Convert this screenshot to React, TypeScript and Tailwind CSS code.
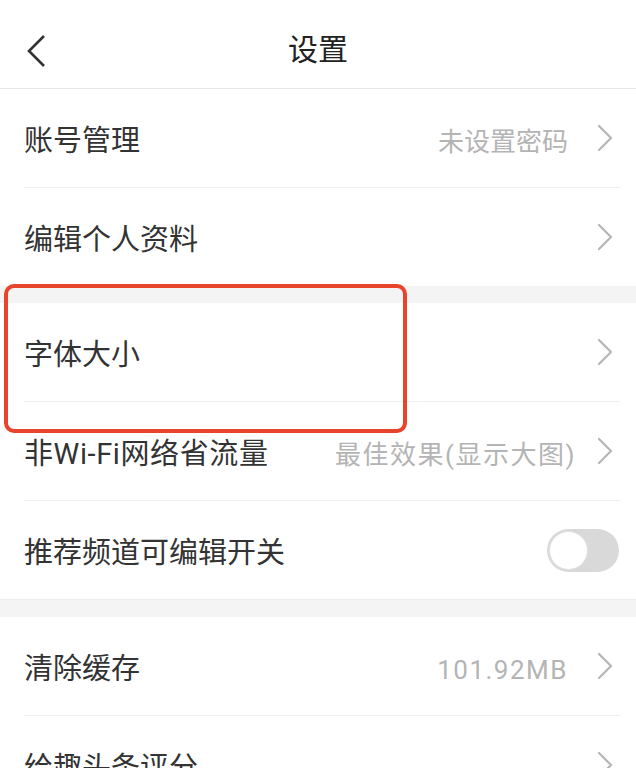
import React from "react";

const font = { fontFamily: 'Roboto, "Noto Sans CJK SC", "Noto Sans", sans-serif' };

function Chevron() {
  return (
    <svg width="18" height="28" viewBox="0 0 18 28" className="shrink-0">
      <path d="M3 2 L15 14 L3 26" fill="none" stroke="#b5b5b5" strokeWidth="2.2" strokeLinecap="round" strokeLinejoin="round" />
    </svg>
  );
}

function Row({
  label,
  value,
  last,
  valueClass = "mr-[28px]",
  labelClass = "",
}: {
  label: string;
  value?: string;
  last?: boolean;
  valueClass?: string;
  labelClass?: string;
}) {
  return (
    <div className="bg-white">
      <div className="flex h-[98px] items-center pl-6 pr-[22px]">
        <span className={`mt-[8px] flex-1 text-[29px] text-[#333333] ${labelClass}`}>{label}</span>
        {value && <span className={`mt-[8px] text-[26px] text-[#b4b4b4] ${valueClass}`}>{value}</span>}
        <Chevron />
      </div>
      {!last && <div className="ml-6 mr-4 h-px bg-[#efefef]" />}
    </div>
  );
}

export default function App() {
  return (
    <div className="relative h-[768px] w-[636px] overflow-hidden bg-white" style={font}>
      <div className="relative flex h-[89px] items-center justify-center border-b border-[#e6e6e6] bg-white">
        <svg width="22" height="34" viewBox="0 0 22 34" className="absolute left-[25px] top-[34px]">
          <path d="M19 2 L4 17 L19 32" fill="none" stroke="#333333" strokeWidth="2.6" strokeLinejoin="miter" />
        </svg>
        <span className="mt-[10px] text-[30px] text-[#222222]">设置</span>
      </div>

      <Row label="账号管理" value="未设置密码" />
      <Row label="编辑个人资料" last />

      <div className="h-[17px] bg-[#f4f4f4]" />

      <Row label="字体大小" />
      <Row
        label="非Wi-Fi网络省流量"
        labelClass="tracking-[0.6px]"
        value="最佳效果(显示大图)"
        valueClass="mr-[20px] tracking-[1.5px]"
      />
      <div className="bg-white">
        <div className="flex h-[98px] items-center pl-6 pr-[17px]">
          <span className="mt-[8px] flex-1 text-[29px] text-[#333333]">推荐频道可编辑开关</span>
          <div className="flex h-[43px] w-[72px] items-center rounded-full bg-[#d9d9d9] p-[2px]">
            <div className="h-[39px] w-[39px] rounded-full border border-[#e0e0e0] bg-white" />
          </div>
        </div>
      </div>

      <div className="h-[18px] border-t border-[#ececec] bg-[#f4f4f4]" />

      <Row label="清除缓存" value="101.92MB" valueClass="mr-[28px] tracking-[1.5px]" />
      <Row label="给趣头条评分" />

      <div className="pointer-events-none absolute left-[4px] top-[284px] h-[149px] w-[403px] rounded-[10px] border-[4px] border-[#e8432b]" />
    </div>
  );
}
